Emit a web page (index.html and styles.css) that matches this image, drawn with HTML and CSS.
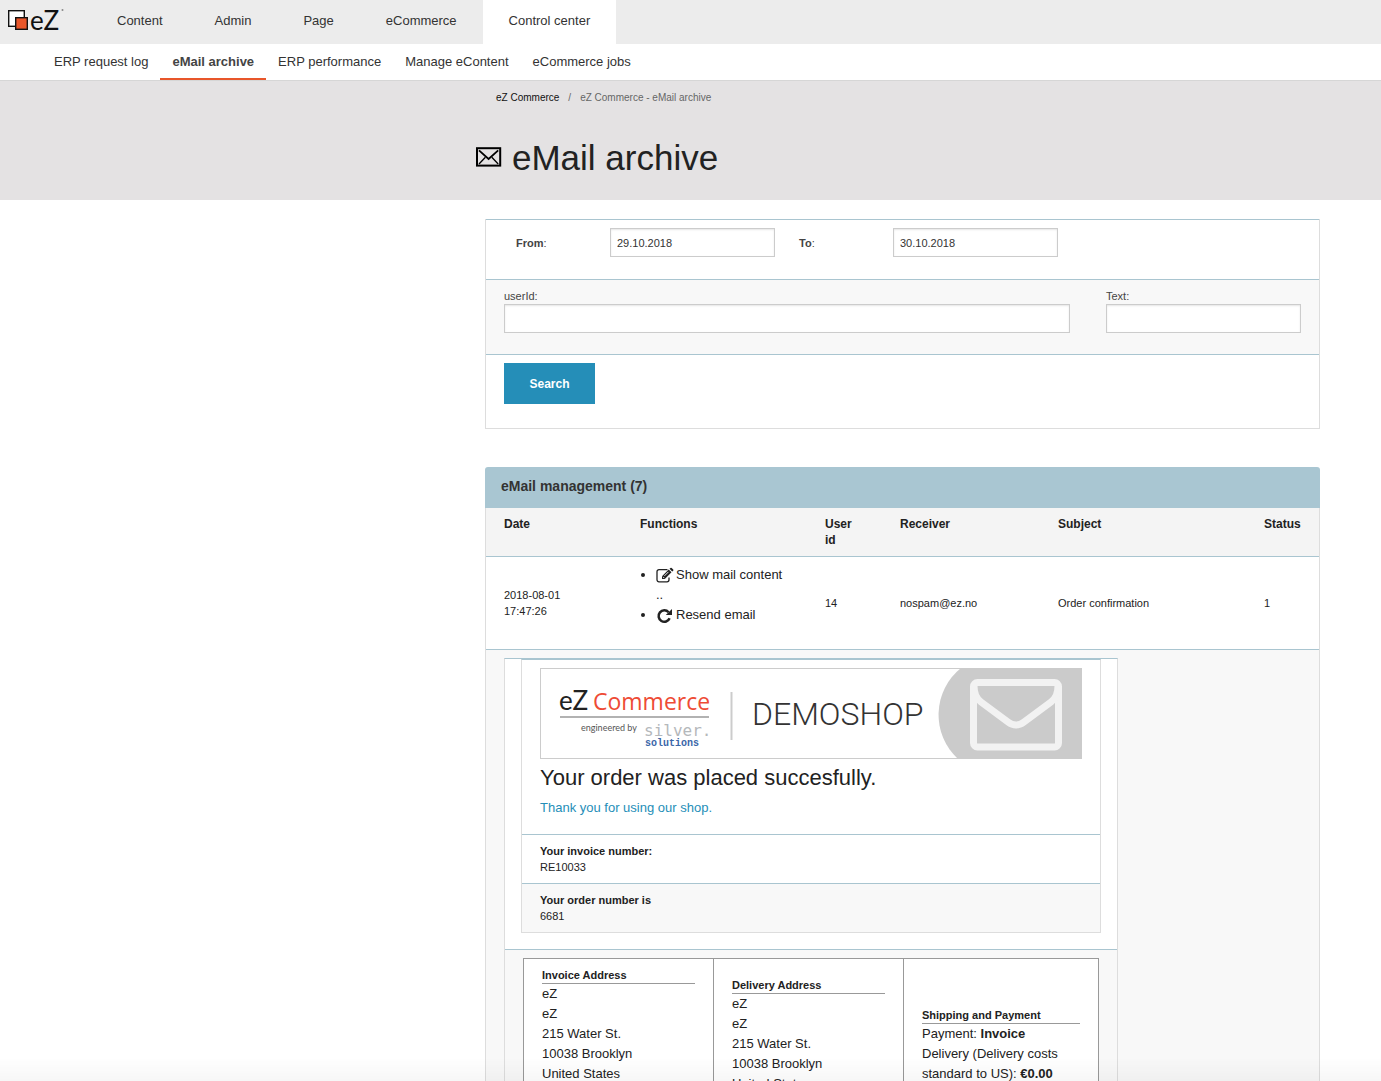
FILE: index.html
```html
<!DOCTYPE html>
<html lang="en">
<head>
<meta charset="utf-8">
<title>eMail archive</title>
<link rel="stylesheet" href="styles.css">
</head>
<body>
<header>
  <nav class="topbar" aria-label="Main">
    <a class="logo" href="#">
      <svg width="60" height="36" viewBox="0 0 60 36" role="img" aria-label="eZ">
        <rect x="1.7" y="4.7" width="15.6" height="15.6" fill="#fff" stroke="#111" stroke-width="1.4"/>
        <rect x="8.7" y="11.7" width="11.6" height="11.6" fill="#e8562a" stroke="#111" stroke-width="1.4"/>
        <text class="logo-text" x="23" y="24">eZ</text>
        <circle cx="55.500" cy="4" r="1" fill="#888"/>
      </svg>
    </a>
    <a class="tab" href="#">Content</a>
    <a class="tab" href="#">Admin</a>
    <a class="tab" href="#">Page</a>
    <a class="tab" href="#">eCommerce</a>
    <a class="tab active" href="#">Control center</a>
  </nav>
  <nav class="subnav" aria-label="Control center">
    <a href="#">ERP request log</a>
    <a class="active" href="#">eMail archive</a>
    <a href="#">ERP performance</a>
    <a href="#">Manage eContent</a>
    <a href="#">eCommerce jobs</a>
  </nav>
</header>
<div class="page-head">
  <nav class="breadcrumb" aria-label="Breadcrumb"><a href="#">eZ Commerce</a><span class="sep">/</span><span>eZ Commerce - eMail archive</span></nav>
  <h1>
    <svg width="26" height="22" viewBox="0 0 26 22" aria-hidden="true" fill="none" stroke="#000" stroke-width="2">
      <rect x="1" y="1.200" width="23.200" height="17.400"/>
      <path d="M3 3.400 L12.600 12 L22.200 3.400" stroke-width="1.800"/>
      <path d="M3 17 L9.400 10.200 M22.200 17 L15.800 10.200" stroke-width="1.300"/>
    </svg>
    <span>eMail archive</span>
  </h1>
</div>
<main>
  <form class="filter">
    <div class="filter-row dates">
      <label for="from"><b>From</b>:</label>
      <input id="from" type="text" value="29.10.2018">
      <label class="to" for="to"><b>To</b>:</label>
      <input id="to" type="text" value="30.10.2018">
    </div>
    <div class="filter-row terms">
      <div class="field"><label for="userid">userId:</label><input id="userid" type="text"></div>
      <div class="field"><label for="text">Text:</label><input id="text" type="text"></div>
    </div>
    <div class="filter-row actions"><button type="submit">Search</button></div>
  </form>

  <section>
    <h2>eMail management (7)</h2>
    <table class="mails">
      <colgroup><col class="c-date"><col class="c-fn"><col class="c-user"><col class="c-recv"><col><col class="c-status"></colgroup>
      <thead>
        <tr><th>Date</th><th>Functions</th><th>User id</th><th>Receiver</th><th>Subject</th><th>Status</th></tr>
      </thead>
      <tbody>
        <tr>
          <td>2018-08-01 17:47:26</td>
          <td class="fn">
            <ul>
              <li><a href="#"><svg width="18" height="16" viewBox="0 0 18 16" aria-hidden="true">
                <path d="M13 9.500v2.300a2 2 0 0 1-2 2H3a2 2 0 0 1-2-2V3.700a2 2 0 0 1 2-2h8.500" fill="none" stroke="#222" stroke-width="1.300"/>
                <path d="M6 11V8.200L12.700 1.500l2.800 2.800L8.800 11z M13.500.8l1-.9q.6-.4 1.200.1l1.500 1.500q.5.6 0 1.200l-1 .9z" fill="#222"/>
                <path d="M7 8.800l1.300 1.300M8.400 7.900l4-4" stroke="#fff" stroke-width=".9" fill="none"/>
              </svg>Show mail content</a><br>..</li>
              <li><a href="#"><svg width="18" height="16" viewBox="0 0 18 16" aria-hidden="true">
                <path d="M13.600 10.200A5.700 5.700 0 1 1 12.600 4.300" fill="none" stroke="#222" stroke-width="2.500"/>
                <path d="M16 .9v6.200H9.800z" fill="#222"/>
              </svg>Resend email</a></li>
            </ul>
          </td>
          <td>14</td><td>nospam@ez.no</td><td>Order confirmation</td><td>1</td>
        </tr>
        <tr class="detail">
          <td colspan="6">
            <article class="mail">
              <div class="mail-body">
                <div class="summary">
                  <div class="intro">
                    <svg class="banner" viewBox="0 0 542 91" role="img" aria-label="eZ Commerce Demoshop">
                      <rect x=".5" y=".5" width="541" height="90" fill="#fff" stroke="#ccc"/>
                      <path d="M421 0A60 60 0 0 0 418 91H542V0z" fill="#cbcbcb"/>
                      <text class="b-ez" x="19" y="42">eZ</text>
                      <text class="b-com" x="53" y="42">Commerce</text>
                      <path d="M20 49h149" stroke="#999" stroke-width="1.500"/>
                      <text class="b-eng" x="41" y="63">engineered by</text>
                      <text class="b-sil" x="104" y="68">silver.</text>
                      <text class="b-sol" x="105" y="78">solutions</text>
                      <path d="M191.500 24v48" stroke="#ccc" stroke-width="2"/>
                      <text class="b-demo" x="212" y="57">DEMOSHOP</text>
                      <g fill="none" stroke="#f2f2f2" stroke-width="7">
                        <rect x="433.500" y="14.500" width="85" height="64.500" rx="4"/>
                        <path d="M434 18q0 11 7 16l27 20q8 6 16 0l27-20q7-5 7-16"/>
                      </g>
                    </svg>
                    <h3>Your order was placed succesfully.</h3>
                    <p>Thank you for using our shop.</p>
                  </div>
                  <div class="fact"><b>Your invoice number:</b><br>RE10033</div>
                  <div class="fact alt"><b>Your order number is</b><br>6681</div>
                </div>
              </div>
              <div class="mail-addresses">
                <div class="addresses">
                  <div class="address">
                    <h4>Invoice Address</h4>
                    eZ<br>eZ<br>215 Water St.<br>10038 Brooklyn<br>United States
                  </div>
                  <div class="address delivery">
                    <h4>Delivery Address</h4>
                    eZ<br>eZ<br>215 Water St.<br>10038 Brooklyn<br>United States
                  </div>
                  <div class="address shipping">
                    <h4>Shipping and Payment</h4>
                    Payment: <b>Invoice</b><br>Delivery (Delivery costs standard to US): <b>€0.00</b>
                  </div>
                </div>
              </div>
            </article>
          </td>
        </tr>
      </tbody>
    </table>
  </section>
</main>
</body>
</html>
```
FILE: styles.css
```css
* { box-sizing: border-box; }
body {
  margin: 0;
  height: 100vh;
  overflow: hidden;
  background: #fff;
  color: #222;
  font: 13px/20px "Liberation Sans", Arial, sans-serif;
}
body::after {
  content: "";
  position: fixed;
  inset: auto 0 0 0;
  height: 24px;
  background: linear-gradient(transparent, rgba(0, 0, 0, .03));
  pointer-events: none;
}
a { color: inherit; text-decoration: none; }
h1, h2, h3, h4, p, ul { margin: 0; }

.topbar { display: flex; height: 44px; padding-left: 7px; background: #ececec; }
.logo { width: 84px; padding-top: 6px; }
.logo svg { display: block; }
.logo-text { font: 26px Lato, sans-serif; fill: #111; }
.tab { padding: 11px 26px 13px; color: #333; }
.tab.active { background: #fff; }

.subnav { display: flex; height: 37px; padding-left: 42px; border-bottom: 1px solid #d6d6d6; color: #333; }
.subnav a { padding: 8px 12px 6px; }
.subnav .active { border-bottom: 2px solid #e8562a; font-weight: bold; color: #444; }

.page-head { height: 119px; padding: 7px 60px 0 476px; background: #e4e2e3; }
.breadcrumb { padding-left: 20px; font-size: 10px; color: #666; }
.breadcrumb a { color: #111; }
.breadcrumb .sep { padding: 0 9px; }
h1 { display: flex; align-items: center; gap: 10px; margin-top: 28px; font-size: 35px; line-height: 44px; font-weight: normal; }

main { padding: 19px 61px 0 485px; }

.filter { border: 1px solid #ddd; border-top: 0; margin-bottom: 38px; font-size: 11px; line-height: 16px; color: #444; }
.filter-row { border-top: 1px solid #a9c5d0; padding: 8px 18px; }
.filter input {
  display: block;
  width: 100%;
  height: 29px;
  padding: 0 6px;
  border: 1px solid #ccc;
  border-radius: 0;
  background: #fff;
  box-shadow: inset 0 1px 2px rgba(0, 0, 0, .1);
  font: 11px "Liberation Sans", Arial, sans-serif;
  color: #333;
}
.dates { display: grid; grid-template-columns: 94px 165px 118px 165px; align-items: center; padding: 8px 30px 22px; }
.dates .to { padding-left: 24px; }
.terms { display: grid; grid-template-columns: 1fr 195px; column-gap: 36px; padding-bottom: 21px; background: #f8f8f8; }
.terms label { display: block; }
.actions { padding-bottom: 24px; }
.filter button {
  display: block;
  width: 91px;
  height: 41px;
  border: 0;
  background: #258eb8;
  color: #fff;
  font: bold 12px "Liberation Sans", Arial, sans-serif;
}

h2 { padding: 9px 16px 12px; border-radius: 3px 3px 0 0; background: #a9c6d2; color: #333; font-size: 14px; line-height: 20px; }
.mails { width: 100%; table-layout: fixed; border-spacing: 0; border: 1px solid #ddd; border-width: 0 1px; font-size: 11px; line-height: 16px; }
.c-date { width: 136px; }
.c-fn { width: 185px; }
.c-user { width: 75px; }
.c-recv { width: 158px; }
.c-status { width: 73px; }
.mails th { padding: 8px 18px; background: #f4f4f4; font-size: 12px; text-align: left; vertical-align: top; }
.mails td { padding: 8px 18px; border-top: 1px solid #a9c5d0; }
.mails .fn { padding-right: 0; font-size: 13px; line-height: 20px; }
.fn ul { padding-left: 16px; margin-bottom: 16px; }
.fn svg { margin-right: 2px; vertical-align: middle; overflow: visible; }
.mails .detail td { padding-bottom: 40px; background: #f8f8f8; }

.mail { max-width: 614px; border: 1px solid #ddd; border-top-color: #a9c5d0; background: #fff; }
.mail-body { padding: 0 16px 16px; }
.summary { border: 1px solid #ddd; border-top-color: #a9c5d0; }
.intro { padding: 8px 18px 18px; }
.banner { display: block; width: 100%; }
h3 { margin: 3px 0 6px; font-size: 22px; line-height: 32px; font-weight: normal; color: #222; }
.intro p { font-size: 13px; line-height: 16px; color: #258eb8; }
.fact { padding: 8px 18px; border-top: 1px solid #a9c5d0; }
.fact.alt { background: #f8f8f8; }

.mail-addresses { padding: 8px 18px; border-top: 1px solid #a9c5d0; background: #f8f8f8; }
.addresses { display: grid; grid-template-columns: 189px 190px 1fr; border: 1px solid #999; background: #fff; }
.address { padding: 8px 18px; font-size: 13px; line-height: 20px; }
.address + .address { border-left: 1px solid #999; }
.address.delivery { padding-top: 18px; }
.address.shipping { padding-top: 48px; }
h4 { border-bottom: 1px solid #999; font-size: 11px; line-height: 16px; }

.b-ez { font: 26px Lato, sans-serif; fill: #222; }
.b-com { font: 23px "Open Sans", sans-serif; fill: #ee4b35; }
.b-eng { font: 9px Lato, sans-serif; fill: #555; }
.b-sil { font: 16px "DejaVu Sans Mono", monospace; fill: #b5b8bb; }
.b-sol { font: bold 10px "Liberation Mono", monospace; fill: #3a66a8; }
.b-demo { font: 300 32px Roboto, sans-serif; fill: #333; }
```
